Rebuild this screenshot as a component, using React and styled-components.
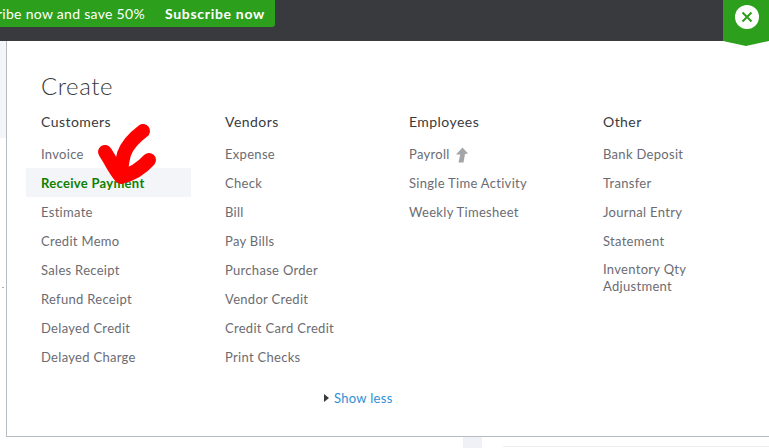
import React from "react";
import styled, { createGlobalStyle } from "styled-components";

const Global = createGlobalStyle`
  html, body { margin: 0; padding: 0; background: #fff; }
  body { font-family: Lato, "Open Sans", sans-serif; width: 769px; height: 448px; overflow: hidden; }
`;

const Page = styled.div`
  position: relative;
  width: 769px;
  height: 448px;
  overflow: hidden;
  background: #fff;
`;

const TopBar = styled.header`
  display: flex;
  justify-content: space-between;
  align-items: flex-start;
  height: 41px;
  background: #393a3d;
`;

const Banner = styled.div`
  display: flex;
  justify-content: flex-end;
  align-items: center;
  gap: 20px;
  box-sizing: border-box;
  width: 275px;
  height: 27px;
  padding-right: 10px;
  background: #2ca01c;
  border-bottom-right-radius: 3px;
  color: #fff;
  white-space: nowrap;
  overflow: hidden;
`;

const Promo = styled.span`
  font-size: 14px;
  letter-spacing: 0.3px;
`;

const Subscribe = styled.span`
  font-size: 14px;
  font-weight: 700;
  letter-spacing: 0.7px;
`;

const CloseTab = styled.div`
  position: relative;
  z-index: 2;
  display: flex;
  justify-content: center;
  padding: 5px 0 0 1px;
  box-sizing: border-box;
  width: 46px;
  height: 46px;
  background: #2ca01c;
  clip-path: polygon(0 0, 100% 0, 100% 41px, 50% 100%, 0 41px);
`;

const CloseCircle = styled.div`
  display: flex;
  align-items: center;
  justify-content: center;
  width: 24px;
  height: 24px;
  border-radius: 50%;
  background: #fff;
`;

const Main = styled.div`
  display: flex;
  height: 396px;
`;

const Rail = styled.div`
  display: flex;
  flex-direction: column;
  width: 6px;
`;

const RailShade = styled.div`
  height: 97px;
  background: #f4f5f8;
`;

const RailTick = styled.div`
  width: 2px;
  height: 1px;
  margin: 149px 0 0 2px;
  background: #a8adb5;
`;

const Panel = styled.section`
  flex: 1;
  box-sizing: border-box;
  padding: 30px 0 0 19px;
  background: #fff;
  border-left: 1px solid #b6bcc4;
  border-bottom: 1px solid #b6bcc4;
`;

const Title = styled.h1`
  margin: 0 0 0 15px;
  font-size: 24px;
  line-height: 29px;
  font-weight: 300;
  color: #393a3d;
  letter-spacing: 0.6px;
`;

const Columns = styled.div`
  display: grid;
  grid-template-columns: 184px 184px 194px 150px;
  margin-top: 11px;
`;

const Column = styled.div`
  display: flex;
  flex-direction: column;
`;

const Heading = styled.h2`
  margin: 0 0 0 15px;
  height: 28px;
  font-size: 14px;
  line-height: 22px;
  font-weight: 400;
  color: #393a3d;
  letter-spacing: 0.45px;
`;

const Item = styled.div`
  display: flex;
  align-items: center;
  gap: 5px;
  box-sizing: border-box;
  width: 165px;
  min-height: 29px;
  padding: ${(p) => (p.$multi ? "6px 15px" : "2px 15px 0")};
  font-size: 13px;
  line-height: 17px;
  letter-spacing: 0.3px;
  color: ${(p) => (p.$active ? "#108000" : "#6b6c72")};
  font-weight: ${(p) => (p.$active ? 700 : 400)};
  background: ${(p) => (p.$active ? "#f4f5f8" : "transparent")};
`;

const ShowLessRow = styled.div`
  display: flex;
  align-items: center;
  gap: 5px;
  margin: 18px 0 0 298px;
  height: 18px;
`;

const Caret = styled.span`
  width: 0;
  height: 0;
  border-left: 5px solid #393a3d;
  border-top: 4px solid transparent;
  border-bottom: 4px solid transparent;
`;

const ShowLess = styled.a`
  font-size: 13px;
  letter-spacing: 0.3px;
  color: #2f8fd6;
`;

const Footer = styled.div`
  display: flex;
  height: 11px;
  padding-left: 463px;
`;

const FooterStripe = styled.div`
  width: 19px;
  background: #f0f1f6;
`;

const FooterLine = styled.div`
  flex: 1;
  height: 1px;
  margin: 9px 0 0 21px;
  background: #eceef1;
`;

const Scribble = styled.svg`
  position: absolute;
  left: 95px;
  top: 120px;
  pointer-events: none;
`;

const columns = [
  { title: "Customers", items: ["Invoice", "Receive Payment", "Estimate", "Credit Memo", "Sales Receipt", "Refund Receipt", "Delayed Credit", "Delayed Charge"] },
  { title: "Vendors", items: ["Expense", "Check", "Bill", "Pay Bills", "Purchase Order", "Vendor Credit", "Credit Card Credit", "Print Checks"] },
  { title: "Employees", items: ["Payroll", "Single Time Activity", "Weekly Timesheet"] },
  { title: "Other", items: ["Bank Deposit", "Transfer", "Journal Entry", "Statement", "Inventory Qty Adjustment"] },
];

const UpArrow = () => (
  <svg width="13" height="16" viewBox="0 0 13 16">
    <path d="M7.5 0.5 L13 6.5 L10 7 L8.5 15.5 L3.5 15.5 L5.2 7.5 L1 7.5 Z" fill="#a3a5a8" />
  </svg>
);

export default function App() {
  return (
    <Page>
      <Global />
      <TopBar>
        <Banner>
          <Promo>Subscribe now and save 50%</Promo>
          <Subscribe>Subscribe now</Subscribe>
        </Banner>
        <CloseTab>
          <CloseCircle>
            <svg width="12" height="12" viewBox="0 0 12 12">
              <path d="M1.5 1.5 L10.5 10.5 M10.5 1.5 L1.5 10.5" stroke="#2ca01c" strokeWidth="2" />
            </svg>
          </CloseCircle>
        </CloseTab>
      </TopBar>
      <Main>
        <Rail>
          <RailShade />
          <RailTick />
        </Rail>
        <Panel>
          <Title>Create</Title>
          <Columns>
            {columns.map((c) => (
              <Column key={c.title}>
                <Heading>{c.title}</Heading>
                {c.items.map((i) => (
                  <Item key={i} $active={i === "Receive Payment"} $multi={i.length > 20}>
                    <span>{i}</span>
                    {i === "Payroll" && <UpArrow />}
                  </Item>
                ))}
              </Column>
            ))}
          </Columns>
          <ShowLessRow>
            <Caret />
            <ShowLess>Show less</ShowLess>
          </ShowLessRow>
        </Panel>
      </Main>
      <Footer>
        <FooterStripe />
        <FooterLine />
      </Footer>
      <Scribble width="70" height="80" viewBox="0 0 70 80">
        <path
          d="M48 11 C40 17 32 25 29 34 C27 42 26 50 26 56 M10 32 C15 39 19 49 26 57 C34 55 45 50 54 40"
          fill="none"
          stroke="#ff0000"
          strokeWidth="14"
          strokeLinecap="round"
          strokeLinejoin="round"
        />
      </Scribble>
    </Page>
  );
}
